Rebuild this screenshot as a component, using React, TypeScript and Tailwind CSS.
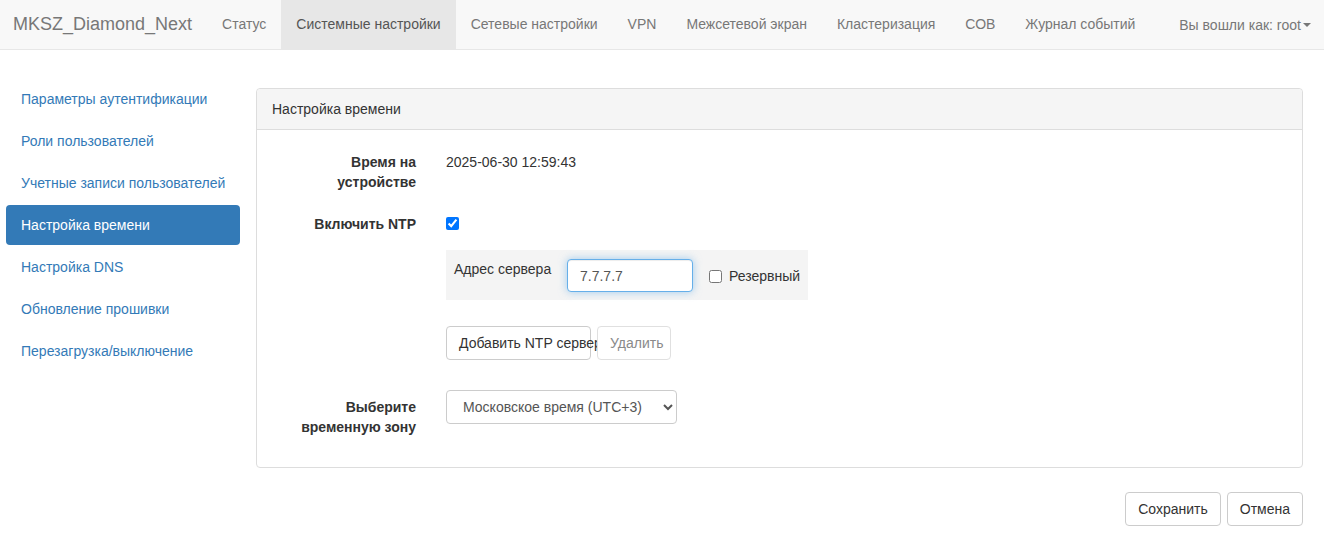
import React from "react";

const NAV = [
  { label: "Статус" },
  { label: "Системные настройки", active: true },
  { label: "Сетевые настройки" },
  { label: "VPN" },
  { label: "Межсетевой экран" },
  { label: "Кластеризация" },
  { label: "СОВ" },
  { label: "Журнал событий" },
];

const SIDE = [
  "Параметры аутентификации",
  "Роли пользователей",
  "Учетные записи пользователей",
  "Настройка времени",
  "Настройка DNS",
  "Обновление прошивки",
  "Перезагрузка/выключение",
];

function Navbar() {
  return (
    <nav className="flex h-[50px] items-stretch border-b border-[#e7e7e7] bg-[#f8f8f8]">
      <a className="pl-[13px] pr-[15px] text-[18px] leading-[49px] text-[#777]">
        MKSZ_Diamond_Next
      </a>
      <ul className="flex">
        {NAV.map((n) => (
          <li key={n.label}>
            <a
              className={`block px-[15px] leading-[49px] ${
                n.active ? "bg-[#e7e7e7] text-[#555]" : "text-[#777]"
              }`}
            >
              {n.label}
            </a>
          </li>
        ))}
      </ul>
      <a className="ml-auto flex items-center pr-[13px] text-[#777]">
        Вы вошли как: root
        <span className="ml-[2px] inline-block h-0 w-0 border-x-[4px] border-t-[4px] border-x-transparent border-t-[#777]" />
      </a>
    </nav>
  );
}

function Sidebar() {
  return (
    <ul className="ml-[6px] mt-[29px] flex w-[234px] shrink-0 flex-col gap-[2px]">
      {SIDE.map((s) => {
        const active = s === "Настройка времени";
        return (
          <li key={s}>
            <a
              className={`flex h-[40px] items-center whitespace-nowrap rounded-[4px] px-[15px] ${
                active ? "bg-[#337ab7] text-white" : "text-[#337ab7]"
              }`}
            >
              {s}
            </a>
          </li>
        );
      })}
    </ul>
  );
}

function Label({ children }: { children: React.ReactNode }) {
  return (
    <label className="w-[144px] shrink-0 pt-[7px] text-right font-bold">
      {children}
    </label>
  );
}

function TimePanel() {
  return (
    <div className="mt-[38px] w-[1047px] rounded-[4px] border border-[#ddd] bg-white">
      <div className="flex h-[41px] items-center rounded-t-[4px] border-b border-[#ddd] bg-[#f5f5f5] px-[15px]">
        Настройка времени
      </div>
      <div className="p-[15px]">
        {/* time on device */}
        <div className="mb-[15px] flex">
          <Label>
            Время на
            <br />
            устройстве
          </Label>
          <div className="ml-[30px] pt-[7px]">2025-06-30 12:59:43</div>
        </div>

        {/* ntp toggle */}
        <div className="mb-[14px] flex h-[29px]">
          <Label>Включить NTP</Label>
          <div className="ml-[30px] pt-[10px]">
            <input
              type="checkbox"
              defaultChecked
              className="m-0 block h-[13px] w-[13px]"
            />
          </div>
        </div>

        {/* servers */}
        <div className="ml-[174px]">
          <div className="flex h-[50px] w-[362px] items-start bg-[#f4f4f4] pl-[8px] pt-[9px]">
            <span className="w-[113px] shrink-0">Адрес сервера</span>
            <input
              defaultValue="7.7.7.7"
              className="h-[33px] w-[126px] rounded-[4px] border border-[#66afe9] bg-white px-[12px] text-[#555] shadow-[inset_0_1px_1px_rgba(0,0,0,0.075),0_0_8px_rgba(102,175,233,0.6)] outline-none"
            />
            <label className="ml-[16px] mt-[7px] flex items-center">
              <input type="checkbox" className="m-0 h-[13px] w-[13px]" />
              <span className="ml-[7px]">Резервный</span>
            </label>
          </div>

          <div className="mt-[26px] flex">
            <button className="h-[34px] w-[145px] overflow-visible whitespace-nowrap rounded-[4px] border border-[#ccc] bg-white pl-[12px] text-left text-[#333]">
              Добавить NTP сервер
            </button>
            <button
              disabled
              className="relative ml-[6px] h-[34px] w-[74px] rounded-[4px] border border-[#e0e0e0] bg-white px-[12px] text-[#8a8a8a]"
            >
              Удалить
            </button>
          </div>
        </div>

        {/* timezone */}
        <div className="mt-[30px] flex pb-[15px]">
          <Label>
            Выберите
            <br />
            временную зону
          </Label>
          <div className="ml-[30px]">
            <select
              defaultValue="msk"
              className="h-[34px] w-[231px] rounded-[4px] border border-[#ccc] bg-white px-[12px] text-[#555]"
            >
              <option value="msk">Московское время (UTC+3)</option>
            </select>
          </div>
        </div>
      </div>
    </div>
  );
}

export default function App() {
  return (
    <div className="min-h-[552px] bg-white font-['Liberation_Sans',Arial,sans-serif] text-[14px] leading-[20px] text-[#333]">
      <Navbar />
      <div className="flex">
        <Sidebar />
        <div className="ml-[16px] flex flex-col">
          <TimePanel />
          <div className="mt-[24px] flex justify-end gap-[6px]">
            <button className="h-[34px] rounded-[4px] border border-[#ccc] bg-white px-[12px] text-[#333]">
              Сохранить
            </button>
            <button className="h-[34px] rounded-[4px] border border-[#ccc] bg-white px-[12px] text-[#333]">
              Отмена
            </button>
          </div>
        </div>
      </div>
    </div>
  );
}
